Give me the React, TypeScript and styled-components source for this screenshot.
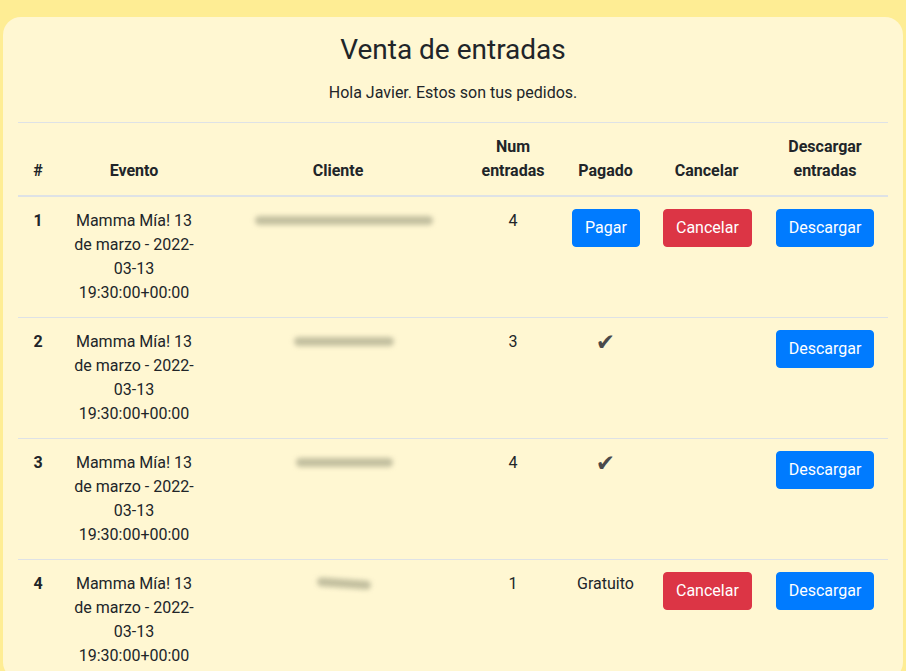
import React from "react";
import styled, { createGlobalStyle } from "styled-components";

const GlobalStyle = createGlobalStyle`
  html, body {
    margin: 0;
    padding: 0;
    background: #feed94;
  }
  body {
    font-family: Roboto, "Liberation Sans", sans-serif;
    font-size: 16px;
    line-height: 1.5;
    color: #212529;
  }
  * { box-sizing: border-box; }
`;

const Page = styled.div`
  padding-top: 17px;
  display: flex;
  justify-content: center;
  min-height: 671px;
`;

const Card = styled.div`
  width: 900px;
  background: #fff7d2;
  border-radius: 18px;
  padding: 16px 15px 0;
`;

const Title = styled.h3`
  margin: 0 0 14px;
  font-size: 28px;
  font-weight: 400;
  line-height: 1.2;
  text-align: center;
`;

const Subtitle = styled.p`
  margin: 0 0 17px;
  text-align: center;
`;

const Table = styled.table`
  width: 100%;
  border-collapse: collapse;
  table-layout: fixed;
`;

const Th = styled.th`
  padding: 12px;
  vertical-align: bottom;
  border-top: 1px solid #dee2e6;
  border-bottom: 2px solid #dee2e6;
  font-weight: 700;
  text-align: center;
`;

const Td = styled.td<{ $bold?: boolean }>`
  padding: 12px;
  vertical-align: top;
  border-top: 1px solid #dee2e6;
  text-align: center;
  font-weight: ${(p) => (p.$bold ? 700 : 400)};
`;

const Button = styled.button<{ $variant: "primary" | "danger" }>`
  display: inline-block;
  font-family: inherit;
  font-size: 16px;
  line-height: 1.5;
  padding: 6px 12px;
  border-radius: 4px;
  border: 1px solid ${(p) => (p.$variant === "danger" ? "#dc3545" : "#007bff")};
  background: ${(p) => (p.$variant === "danger" ? "#dc3545" : "#007bff")};
  color: #fff;
  cursor: pointer;
`;

const Smudge = styled.span<{ $w: number; $tilt?: number }>`
  display: inline-block;
  width: ${(p) => p.$w}px;
  height: 9px;
  margin-top: 7px;
  margin-left: 12px;
  border-radius: 5px;
  background: rgba(170, 168, 138, 0.7);
  filter: blur(2.5px);
  transform: rotate(${(p) => p.$tilt ?? 0}deg);
  vertical-align: top;
`;

const Check = styled.span`
  display: inline-block;
  font-family: "DejaVu Sans", sans-serif;
  font-size: 23px;
  line-height: 24px;
  color: #4a4a4a;
`;

type Order = {
  n: number;
  client: number;
  tilt?: number;
  qty: number;
  paid: "pay" | "yes" | "free";
  cancel: boolean;
};

const orders: Order[] = [
  { n: 1, client: 178, qty: 4, paid: "pay", cancel: true },
  { n: 2, client: 100, qty: 3, paid: "yes", cancel: false },
  { n: 3, client: 97, qty: 4, paid: "yes", cancel: false },
  { n: 4, client: 54, tilt: 4, qty: 1, paid: "free", cancel: true },
];

const widths = [40, 152, 256, 94, 91, 111, 126];

export default function App() {
  return (
    <>
      <GlobalStyle />
      <Page>
        <Card>
          <Title>Venta de entradas</Title>
          <Subtitle>Hola Javier. Estos son tus pedidos.</Subtitle>
          <Table>
            <colgroup>
              {widths.map((w, i) => (
                <col key={i} style={{ width: w }} />
              ))}
            </colgroup>
            <thead>
              <tr>
                <Th>#</Th>
                <Th>Evento</Th>
                <Th>Cliente</Th>
                <Th>Num entradas</Th>
                <Th>Pagado</Th>
                <Th>Cancelar</Th>
                <Th>Descargar entradas</Th>
              </tr>
            </thead>
            <tbody>
              {orders.map((o) => (
                <tr key={o.n}>
                  <Td $bold>{o.n}</Td>
                  <Td>
                    Mamma Mía! 13 de marzo - 2022-<wbr />03-13 19:30:00+00:00
                  </Td>
                  <Td>
                    <Smudge $w={o.client} $tilt={o.tilt} />
                  </Td>
                  <Td>{o.qty}</Td>
                  <Td>
                    {o.paid === "pay" && <Button $variant="primary">Pagar</Button>}
                    {o.paid === "yes" && <Check>✔</Check>}
                    {o.paid === "free" && "Gratuito"}
                  </Td>
                  <Td>
                    {o.cancel && <Button $variant="danger">Cancelar</Button>}
                  </Td>
                  <Td>
                    <Button $variant="primary">Descargar</Button>
                  </Td>
                </tr>
              ))}
            </tbody>
          </Table>
        </Card>
      </Page>
    </>
  );
}
